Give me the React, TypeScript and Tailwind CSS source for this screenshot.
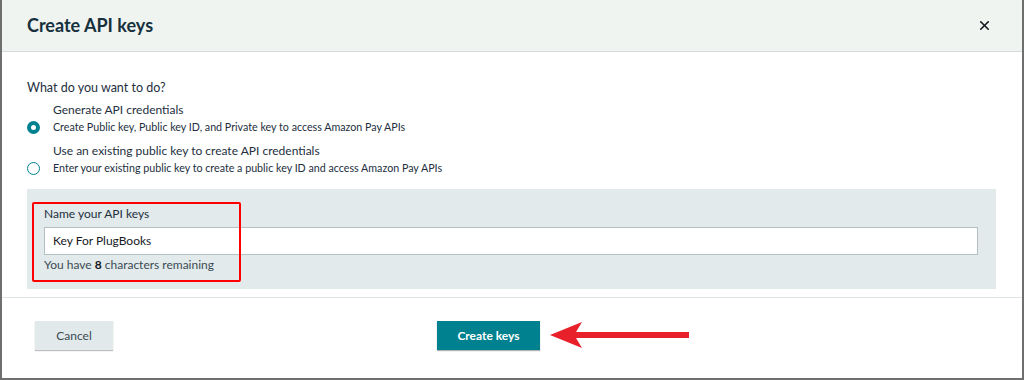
import { X } from 'lucide-react';

function Radio({ checked }: { checked: boolean }) {
  return checked ? (
    <span className="w-[13px] h-[13px] rounded-full border-[4px] border-[#00818f] bg-white shrink-0" />
  ) : (
    <span className="w-[13px] h-[13px] rounded-full border-[1.5px] border-[#00818f] bg-white shrink-0" />
  );
}

export default function App() {
  const options = [
    {
      title: 'Generate API credentials',
      desc: 'Create Public key, Public key ID, and Private key to access Amazon Pay APIs',
      checked: true,
    },
    {
      title: 'Use an existing public key to create API credentials',
      desc: 'Enter your existing public key to create a public key ID and access Amazon Pay APIs',
      checked: false,
    },
  ];

  return (
    <div
      className="w-[1024px] h-[380px] bg-white border-l-2 border-r-2 border-b-2 border-[#6f6f6f] text-[#16191f] overflow-hidden"
      style={{ fontFamily: 'Lato, "Open Sans", Arial, sans-serif' }}
    >
      <div className="h-[52px] bg-[#f0f4f1] border-b border-[#d5dbdb] flex items-center justify-between pl-[25px] pr-[30px]">
        <h1 className="text-[18px] font-bold text-[#16313d]">Create API keys</h1>
        <X className="w-[15px] h-[15px] text-[#16191f]" strokeWidth={2.6} />
      </div>

      <div className="pl-[25px] pr-[24px] pt-[27px] h-[246px] border-b border-[#dfe5e5]">
        <p className="text-[12.5px] leading-[18px] text-[#232f3e]">What do you want to do?</p>

        <div className="mt-[4px] flex flex-col gap-[7px]">
          {options.map((o) => (
            <div key={o.title} className="flex flex-col">
              <span className="pl-[26px] text-[12px] leading-[18px] text-[#232f3e]">{o.title}</span>
              <div className="flex items-center gap-[13px]">
                <Radio checked={o.checked} />
                <span className="text-[10.7px] leading-[16px] text-[#232f3e]">{o.desc}</span>
              </div>
            </div>
          ))}
        </div>

        <div className="relative mt-[13px] w-[969px] h-[100px] bg-[#e2eaeb] pl-[17px] pr-[18px] pt-[17px]">
          <p className="text-[12px] leading-[16px] text-[#232f3e]">Name your API keys</p>
          <div className="mt-[5px] h-[28px] bg-white border border-[#b4c1c2] flex items-center px-[8px] text-[12px] text-[#16191f]">
            Key For PlugBooks
          </div>
          <p className="mt-[2px] text-[12px] leading-[16px] text-[#3b4a55]">
            You have <span className="font-bold text-[#16191f]">8</span> characters remaining
          </p>
          <div className="absolute left-[5px] top-[13px] w-[209px] h-[80px] border-2 border-[#ff0000] rounded-[2px]" />
        </div>
      </div>

      <div className="relative flex items-center pl-[33px] pt-[23px]">
        <button className="w-[78px] h-[29px] bg-[#e1e9ea] text-[12px] text-[#3b4a55] shadow-[0_1px_1px_rgba(0,0,0,0.25)]">
          Cancel
        </button>
        <button className="ml-[324px] w-[103px] h-[29px] bg-[#00818f] text-[12px] font-bold text-white shadow-[0_1px_1px_rgba(0,0,0,0.3)]">
          Create keys
        </button>
        <svg className="absolute left-[546px] top-[21px]" width="144" height="32" viewBox="0 0 144 32">
          <polygon points="2,16 34,3 28,13 141,13 141,19 28,19 34,29" fill="#e8202a" />
        </svg>
      </div>
    </div>
  );
}
